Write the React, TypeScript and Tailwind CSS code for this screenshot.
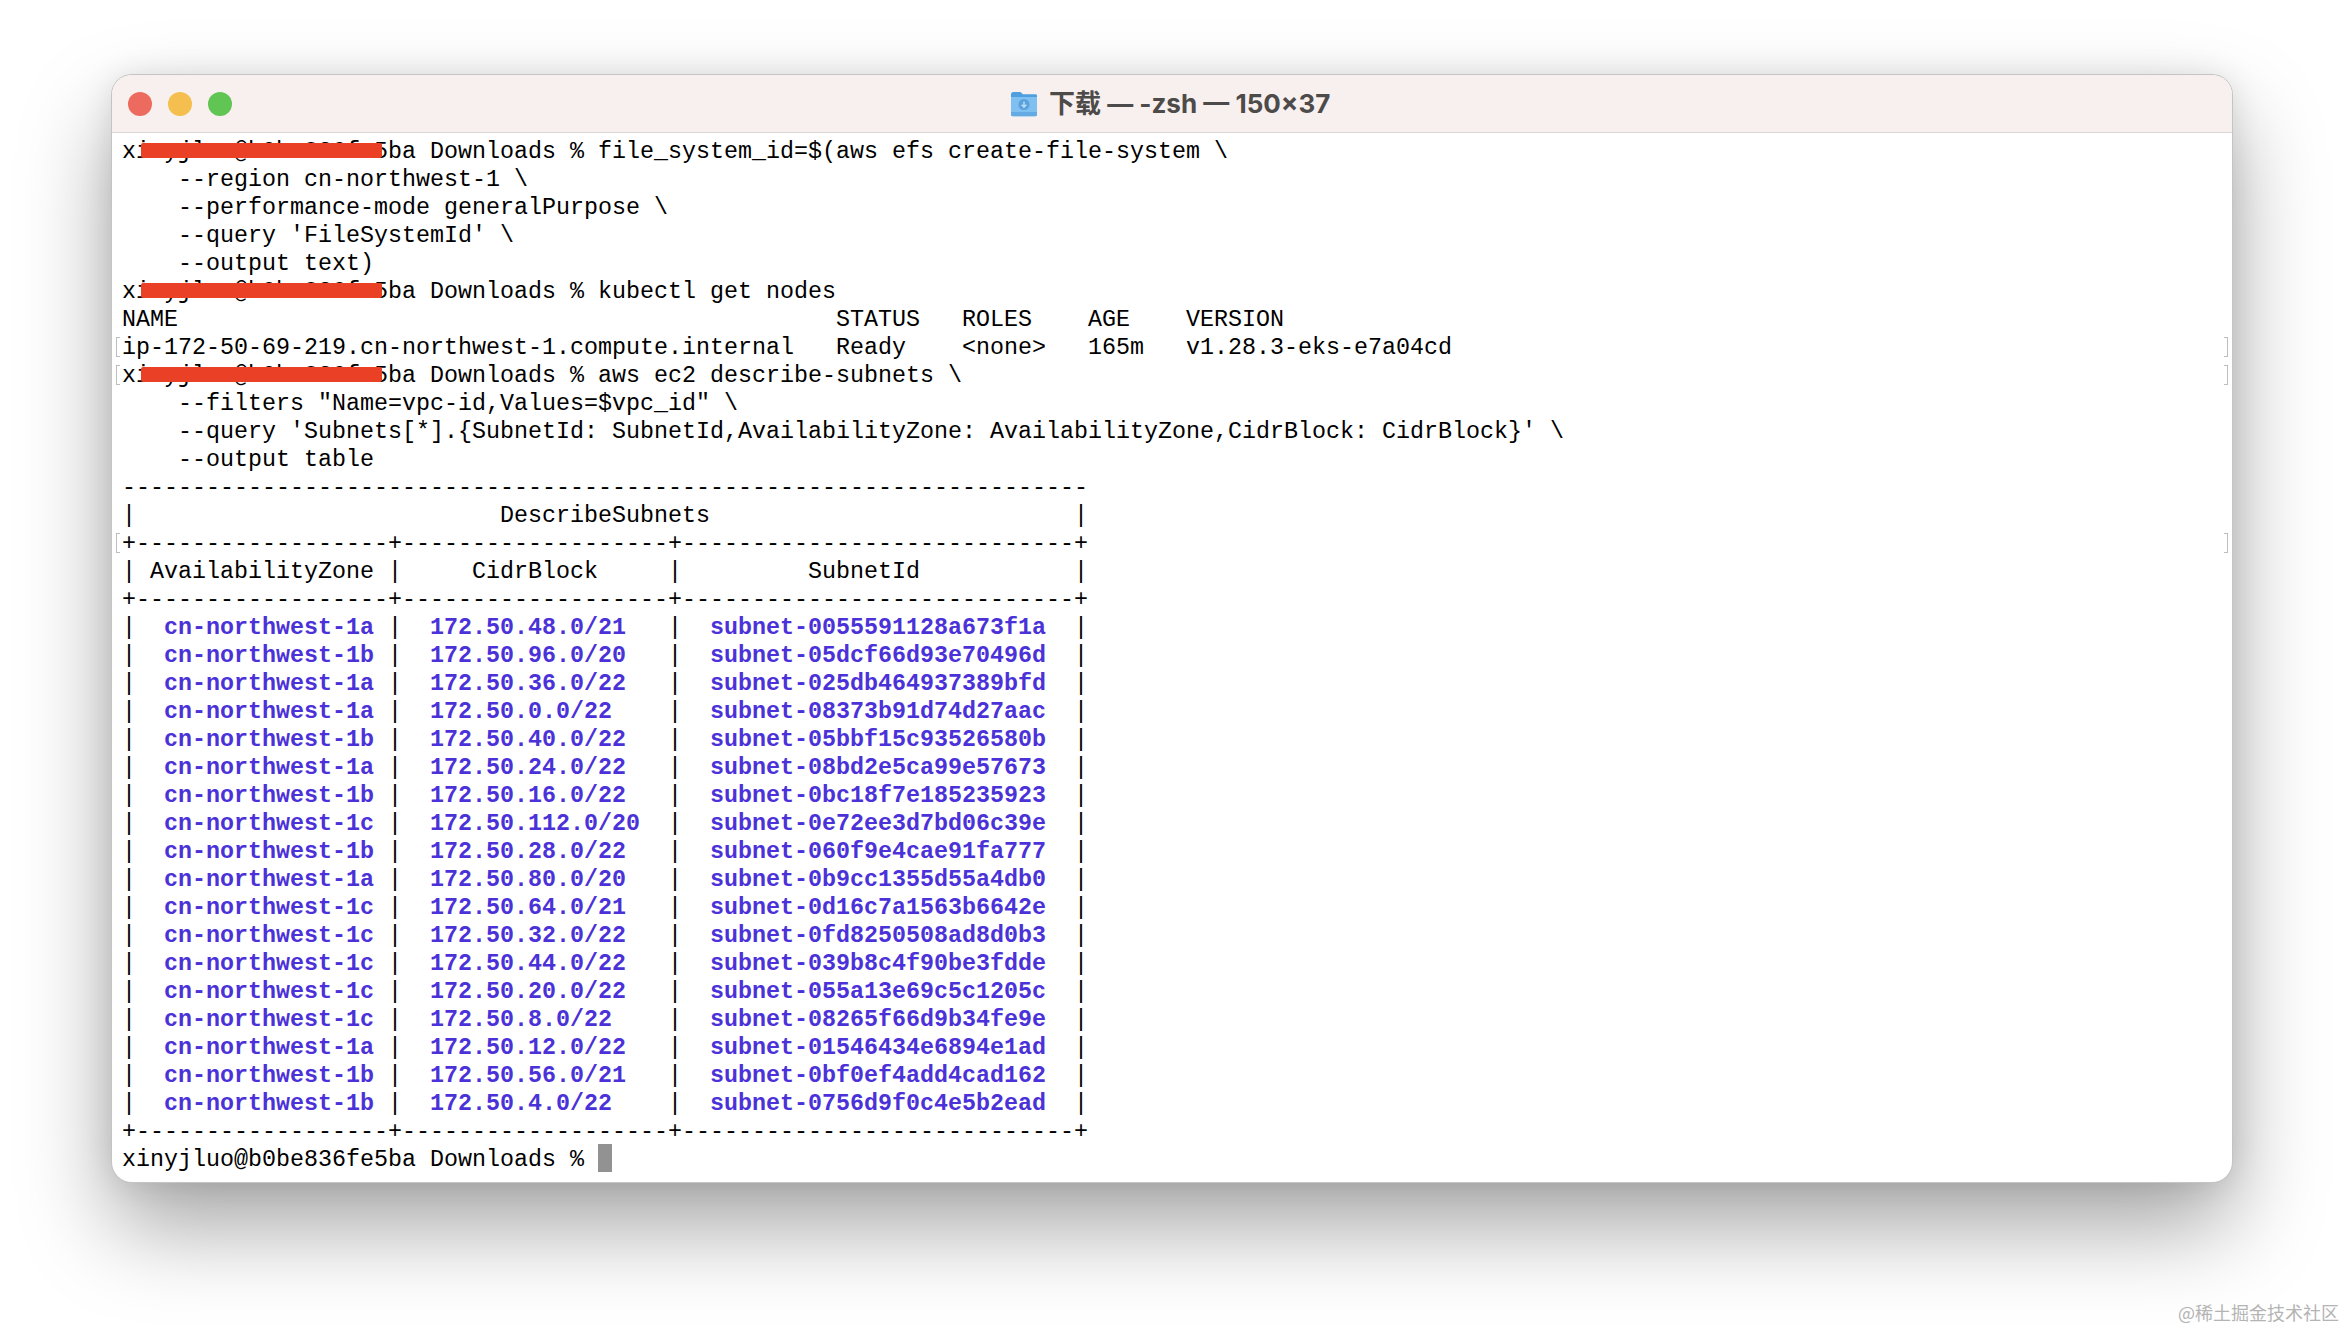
const subnets = [
  ["cn-northwest-1a", "172.50.48.0/21", "subnet-0055591128a673f1a"],
  ["cn-northwest-1b", "172.50.96.0/20", "subnet-05dcf66d93e70496d"],
  ["cn-northwest-1a", "172.50.36.0/22", "subnet-025db464937389bfd"],
  ["cn-northwest-1a", "172.50.0.0/22", "subnet-08373b91d74d27aac"],
  ["cn-northwest-1b", "172.50.40.0/22", "subnet-05bbf15c93526580b"],
  ["cn-northwest-1a", "172.50.24.0/22", "subnet-08bd2e5ca99e57673"],
  ["cn-northwest-1b", "172.50.16.0/22", "subnet-0bc18f7e185235923"],
  ["cn-northwest-1c", "172.50.112.0/20", "subnet-0e72ee3d7bd06c39e"],
  ["cn-northwest-1b", "172.50.28.0/22", "subnet-060f9e4cae91fa777"],
  ["cn-northwest-1a", "172.50.80.0/20", "subnet-0b9cc1355d55a4db0"],
  ["cn-northwest-1c", "172.50.64.0/21", "subnet-0d16c7a1563b6642e"],
  ["cn-northwest-1c", "172.50.32.0/22", "subnet-0fd8250508ad8d0b3"],
  ["cn-northwest-1c", "172.50.44.0/22", "subnet-039b8c4f90be3fdde"],
  ["cn-northwest-1c", "172.50.20.0/22", "subnet-055a13e69c5c1205c"],
  ["cn-northwest-1c", "172.50.8.0/22", "subnet-08265f66d9b34fe9e"],
  ["cn-northwest-1a", "172.50.12.0/22", "subnet-01546434e6894e1ad"],
  ["cn-northwest-1b", "172.50.56.0/21", "subnet-0bf0ef4add4cad162"],
  ["cn-northwest-1b", "172.50.4.0/22", "subnet-0756d9f0c4e5b2ead"],
];

const PROMPT = "xinyjluo@b0be836fe5ba Downloads % ";
const SEPARATOR = "+" + "-".repeat(18) + "+" + "-".repeat(19) + "+" + "-".repeat(28) + "+";

function Redaction() {
  return <div className="absolute left-[19px] top-[5px] h-[15px] w-[241px] rounded-[2px] bg-[#ea4126]" />;
}

function Line({
  text,
  marked = false,
  redacted = false,
}: {
  text: React.ReactNode;
  marked?: boolean;
  redacted?: boolean;
}) {
  return (
    <div className="relative h-[28px] whitespace-pre">
      {text}
      {redacted ? <Redaction /> : null}
      {marked ? (
        <>
          <div className="absolute -left-[6px] top-[3px] h-[20px] w-[4px] border-y border-l border-[#bdbdbd]" />
          <div className="absolute right-[2px] top-[3px] h-[20px] w-[4px] border-y border-r border-[#bdbdbd]" />
        </>
      ) : null}
    </div>
  );
}

function FolderIcon() {
  return (
    <svg width="28" height="28" viewBox="0 0 28 28" className="shrink-0">
      <path d="M1 4.5C1 3.1 1.9 2 3.2 2h6.6c.8 0 1.3.3 1.9 1l1.1 1.2H25.6c.8 0 1.4.7 1.4 1.5V8H1z" fill="#4f9fe0" />
      <path d="M1 7h26v17.6c0 .9-.7 1.6-1.6 1.6H2.6c-.9 0-1.6-.7-1.6-1.6z" fill="#7fc0f0" />
      <path d="M1 22h26v2.6c0 .9-.7 1.6-1.6 1.6H2.6c-.9 0-1.6-.7-1.6-1.6z" fill="#64abe3" />
      <circle cx="14" cy="14.5" r="5.6" fill="#5ba1dc" />
      <path d="M14 11.4v5.4M11.6 14.7l2.4 2.4 2.4-2.4" fill="none" stroke="#b4dbf7" strokeWidth="1.5" />
    </svg>
  );
}

export default function App() {
  return (
    <div className="relative h-[1330px] w-[2344px] overflow-hidden bg-white pl-[112px] pt-[75px]">
      <div className="flex h-[1107px] w-[2120px] flex-col overflow-hidden rounded-[20px] bg-white shadow-[0_0_0_1px_#c4c4c4,0_44px_90px_rgba(0,0,0,0.36),0_0_30px_rgba(0,0,0,0.1)]">
        <div className="flex h-[58px] shrink-0 items-center border-b border-[#d9d6d5] bg-[#f8f0ee] pl-[16px]">
          <div className="flex items-center gap-[16px]">
            <div className="h-[24px] w-[24px] rounded-full bg-[#ec6a5e]" />
            <div className="h-[24px] w-[24px] rounded-full bg-[#f4bf4f]" />
            <div className="h-[24px] w-[24px] rounded-full bg-[#61c554]" />
          </div>
          <div className="ml-[778px] flex items-center gap-[11px] font-['Inter','Noto_Sans_CJK_SC',sans-serif] text-[26px] font-bold text-[#4d4b4a]">
            <FolderIcon />
            <span>下载 — -zsh — 150×37</span>
          </div>
        </div>
        <div className="pl-[10px] pr-[2px] pt-[5px] font-['Liberation_Mono',monospace] text-[23.33px] leading-[28px] text-black">
          <Line redacted text={PROMPT + "file_system_id=$(aws efs create-file-system \\"} />
          <Line text="    --region cn-northwest-1 \" />
          <Line text="    --performance-mode generalPurpose \" />
          <Line text="    --query 'FileSystemId' \" />
          <Line text="    --output text)" />
          <Line redacted text={PROMPT + "kubectl get nodes"} />
          <Line text={"NAME".padEnd(51) + "STATUS   ROLES    AGE    VERSION"} />
          <Line marked text="ip-172-50-69-219.cn-northwest-1.compute.internal   Ready    <none>   165m   v1.28.3-eks-e7a04cd" />
          <Line marked redacted text={PROMPT + "aws ec2 describe-subnets \\"} />
          <Line text={'    --filters "Name=vpc-id,Values=$vpc_id" \\'} />
          <Line text="    --query 'Subnets[*].{SubnetId: SubnetId,AvailabilityZone: AvailabilityZone,CidrBlock: CidrBlock}' \" />
          <Line text="    --output table" />
          <Line text={"-".repeat(69)} />
          <Line text={"|" + " ".repeat(26) + "DescribeSubnets" + " ".repeat(26) + "|"} />
          <Line marked text={SEPARATOR} />
          <Line text="| AvailabilityZone |     CidrBlock     |         SubnetId           |" />
          <Line text={SEPARATOR} />
          {subnets.map(([zone, cidr, id]) => (
            <Line
              key={id}
              text={
                <>
                  {"|  "}
                  <span className="font-bold text-[#4b32d8]">{zone}</span>
                  {" |  "}
                  <span className="font-bold text-[#4b32d8]">{cidr.padEnd(17)}</span>
                  {"|  "}
                  <span className="font-bold text-[#4b32d8]">{id}</span>
                  {"  |"}
                </>
              }
            />
          ))}
          <Line text={SEPARATOR} />
          <Line
            text={
              <>
                {PROMPT}
                <span className="absolute left-[476px] -top-[2px] h-[28px] w-[14px] bg-[#929292]" />
              </>
            }
          />
        </div>
      </div>
      <div className="absolute left-[2178px] top-[1300px] font-['Noto_Sans_CJK_SC',sans-serif] text-[18px] leading-[24px] text-[#b4b4b4]">
        @稀土掘金技术社区
      </div>
    </div>
  );
}
